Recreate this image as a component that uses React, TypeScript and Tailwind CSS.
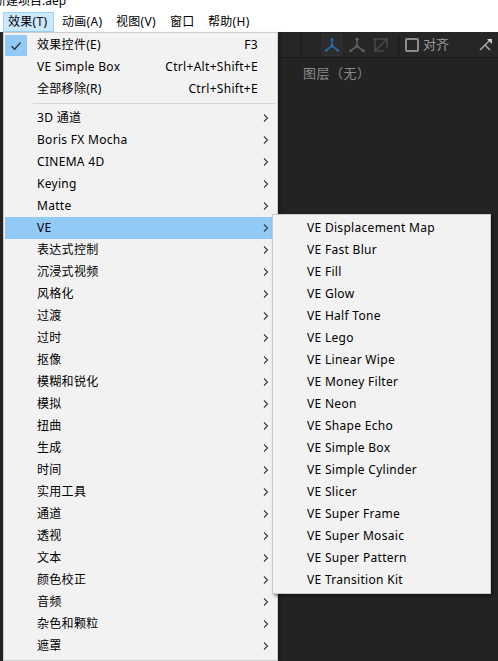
import React from "react";

const FONT = { fontFamily: '"Noto Sans", "Noto Sans CJK SC", sans-serif' };

type Item = { label: string; shortcut?: string; checked?: boolean; sub?: boolean; active?: boolean };

const top: Item[] = [
  { label: "效果控件(E)", shortcut: "F3", checked: true },
  { label: "VE Simple Box", shortcut: "Ctrl+Alt+Shift+E" },
  { label: "全部移除(R)", shortcut: "Ctrl+Shift+E" },
];

const groups: Item[] = [
  "3D 通道",
  "Boris FX Mocha",
  "CINEMA 4D",
  "Keying",
  "Matte",
  "VE",
  "表达式控制",
  "沉浸式视频",
  "风格化",
  "过渡",
  "过时",
  "抠像",
  "模糊和锐化",
  "模拟",
  "扭曲",
  "生成",
  "时间",
  "实用工具",
  "通道",
  "透视",
  "文本",
  "颜色校正",
  "音频",
  "杂色和颗粒",
  "遮罩",
].map((l) => ({ label: l, sub: true, active: l === "VE" }));

const veItems = [
  "VE Displacement Map",
  "VE Fast Blur",
  "VE Fill",
  "VE Glow",
  "VE Half Tone",
  "VE Lego",
  "VE Linear Wipe",
  "VE Money Filter",
  "VE Neon",
  "VE Shape Echo",
  "VE Simple Box",
  "VE Simple Cylinder",
  "VE Slicer",
  "VE Super Frame",
  "VE Super Mosaic",
  "VE Super Pattern",
  "VE Transition Kit",
];

function Chevron() {
  return (
    <svg width="6" height="8" viewBox="0 0 6 8" className="block">
      <path d="M1 0.5 L4.5 4 L1 7.5" fill="none" stroke="#3a3a3a" strokeWidth="1.1" />
    </svg>
  );
}

function Row({ item }: { item: Item }) {
  return (
    <div
      className={`flex h-[22px] items-center text-[12px] tracking-[0.3px] text-black ${item.active ? "bg-[#91c9f7]" : ""}`}
    >
      <div className="flex h-[22px] w-[32px] shrink-0 items-center">
        {item.checked && (
          <div className="mt-[1px] flex h-[21px] w-[22px] items-center justify-center bg-[#91c9f7]">
            <svg width="12" height="10" viewBox="0 0 12 10">
              <path d="M1.5 5.2 L4.6 8.2 L10.5 1.6" fill="none" stroke="#2f2f2f" strokeWidth="1.4" />
            </svg>
          </div>
        )}
      </div>
      <div className="flex-1 whitespace-nowrap">{item.label}</div>
      {item.shortcut && <div className="whitespace-nowrap">{item.shortcut}</div>}
      <div className="flex w-[18px] shrink-0 items-center pl-[5px]">{item.sub && <Chevron />}</div>
    </div>
  );
}

function AxisIcon({ color }: { color: string }) {
  return (
    <svg width="20" height="20" viewBox="0 0 20 20">
      <path d="M10 11 L10 3 M10 11 L3.5 16 M10 11 L16.5 16" stroke={color} strokeWidth="1.6" fill="none" />
      <path d="M7.5 5 L10 2 L12.5 5 Z" fill={color} />
      <path d="M2 17.5 L3 13.8 L5.6 16.6 Z" fill={color} />
      <path d="M18 17.5 L17 13.8 L14.4 16.6 Z" fill={color} />
      <circle cx="10" cy="11" r="1.8" fill={color} />
    </svg>
  );
}

export default function App() {
  return (
    <div className="relative h-[661px] w-[498px] overflow-hidden bg-white" style={FONT}>
      {/* title bar (cut off) */}
      <div className="h-[11px] overflow-hidden">
        <div className="-mt-[8px] -ml-[6px] text-[12px] leading-[18px] text-black">新建项目.aep</div>
      </div>
      {/* menu bar */}
      <div className="flex h-[21px] items-center text-[12px] tracking-[0.3px] text-black">
        <div className="ml-[3px] flex h-[20px] w-[51px] items-center border border-[#99d1ff] bg-[#cce8ff] pl-[4px]">
          效果(T)
        </div>
        <div className="w-[54px] pl-[8px]">动画(A)</div>
        <div className="w-[54px] pl-[8px]">视图(V)</div>
        <div className="w-[38px] pl-[8px]">窗口</div>
        <div className="pl-[8px]">帮助(H)</div>
      </div>
      {/* dark workspace */}
      <div className="flex h-[629px] flex-col bg-[#232323]">
        <div className="flex h-[26px] items-center border-b border-[#1a1a1a] bg-[#262626]">
          <div className="ml-[300px] h-[22px] w-[2px] bg-[#1e1e1e]" />
          <div className="ml-[20px] flex h-[22px] w-[20px] items-center justify-center rounded-[2px] border border-[#333] bg-[#2c2c2c]">
            <AxisIcon color="#2a6bb3" />
          </div>
          <div className="ml-[5px] flex h-[22px] w-[20px] items-center justify-center">
            <AxisIcon color="#5e5e5e" />
          </div>
          <div className="ml-[4px] flex h-[22px] w-[20px] items-center justify-center">
            <svg width="18" height="18" viewBox="0 0 18 18">
              <path d="M3 6 L3 15 L12 15 M6 3 L15 3 L15 12" stroke="#4a4a4a" strokeWidth="1.5" fill="none" />
              <path d="M4 14 L14 4" stroke="#4a4a4a" strokeWidth="1.5" />
              <path d="M1.5 2 L6 2.5 L2 6.5 Z" fill="#4a4a4a" />
            </svg>
          </div>
          <div className="ml-[7px] h-[20px] w-[2px] bg-[#1e1e1e]" />
          <div className="ml-[5px] h-[14px] w-[14px] rounded-[2px] border-2 border-[#8c8c8c]" />
          <div className="ml-[4px] text-[13px] text-[#9b9b9b]">对齐</div>
          <div className="ml-[30px]">
            <svg width="14" height="14" viewBox="0 0 14 14">
              <path d="M1 12 L6 7 L11 12" stroke="#a8a8a8" strokeWidth="1.5" fill="none" />
              <path d="M6 7 L12 1" stroke="#a8a8a8" strokeWidth="1.5" />
              <path d="M8 1 L13 1 L13 6 Z" fill="#d0d0d0" />
            </svg>
          </div>
        </div>
        <div className="ml-[303px] mt-[6px] text-[13px] tracking-[0.5px] text-[#8a8a8a]">图层（无）</div>
      </div>

      {/* main dropdown */}
      <div className="absolute left-[3px] top-[32px] w-[275px] border border-[#cccccc] bg-[#f2f2f2] px-[1px] py-[1px] pb-[3px] shadow-[2px_2px_3px_rgba(0,0,0,0.35)]">
        {top.map((it) => (
          <Row key={it.label} item={it} />
        ))}
        <div className="flex h-[7px] items-center pl-[28px]">
          <div className="h-[1px] w-full bg-[#d7d7d7]" />
        </div>
        {groups.map((it) => (
          <Row key={it.label} item={it} />
        ))}
      </div>

      {/* VE submenu */}
      <div className="absolute left-[272px] top-[214px] w-[219px] border border-[#cccccc] bg-[#f2f2f2] py-[2px] shadow-[2px_2px_3px_rgba(0,0,0,0.45)]">
        {veItems.map((l) => (
          <div
            key={l}
            className="flex h-[22px] items-center whitespace-nowrap pl-[34px] text-[12px] tracking-[0.3px] text-black"
          >
            {l}
          </div>
        ))}
      </div>
    </div>
  );
}
